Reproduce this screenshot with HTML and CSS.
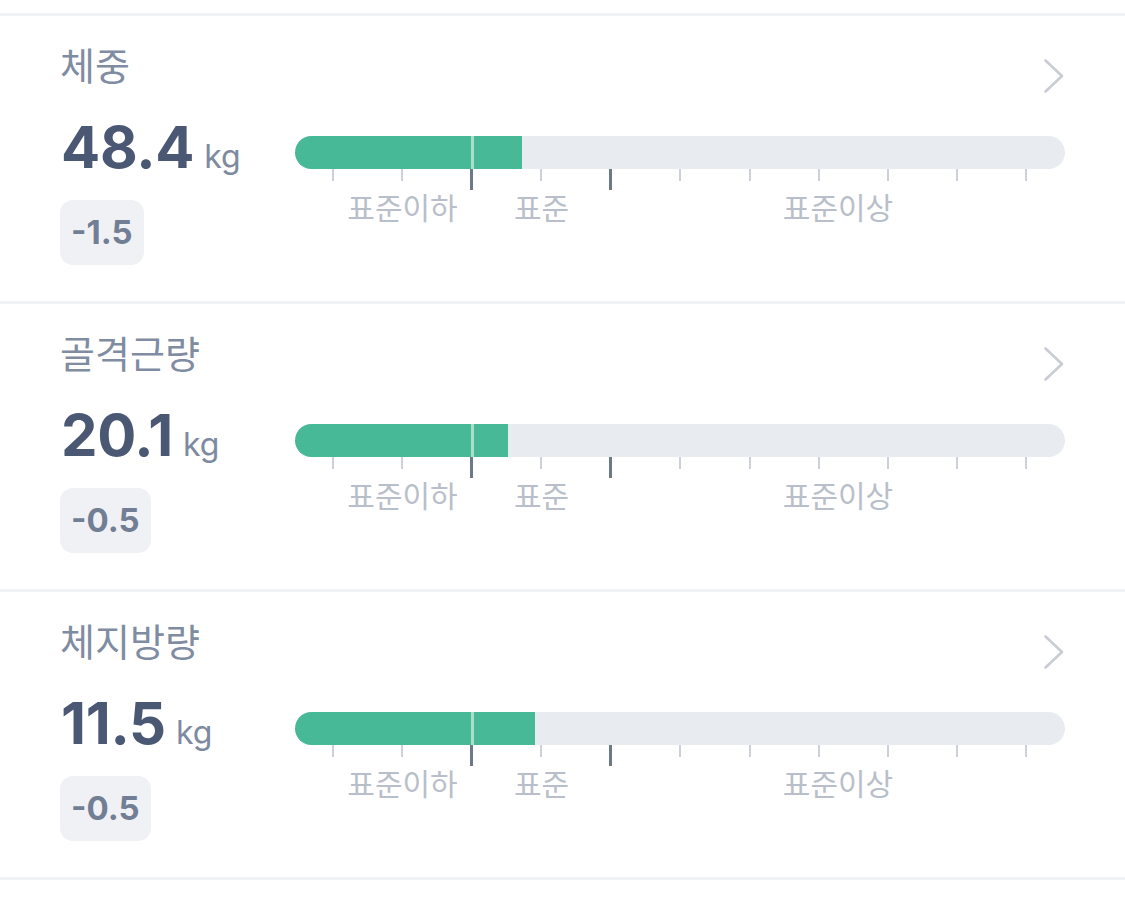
FILE: index.html
```html
<!DOCTYPE html>
<html lang="ko">
<head>
<meta charset="utf-8">
<link rel="stylesheet" href="styles.css">
</head>
<body>
<div class="list">
  <div class="row">
    <div class="head">
      <div class="title">체중</div>
      <svg class="chev" width="22" height="36" viewBox="0 0 22 36"><path d="M2.5 2.5 L19 18 L2.5 33.5" fill="none" stroke="#c9ccd3" stroke-width="2.6" stroke-linecap="round" stroke-linejoin="round"/></svg>
    </div>
    <div class="body">
      <div class="left">
        <div class="value"><span class="num">48.4</span><span class="unit">kg</span></div>
        <div class="badge">-1.5</div>
      </div>
      <div class="gauge">
        <div class="bar"><div class="fill" style="width:29.5%"></div><div class="mark"></div></div>
        <div class="ticks"><i></i><i></i><i class="big"></i><i></i><i class="big"></i><i></i><i></i><i></i><i></i><i></i><i></i></div>
        <div class="labels"><span class="l1">표준이하</span><span class="l2">표준</span><span class="l3">표준이상</span></div>
      </div>
    </div>
  </div>
  <div class="row">
    <div class="head">
      <div class="title">골격근량</div>
      <svg class="chev" width="22" height="36" viewBox="0 0 22 36"><path d="M2.5 2.5 L19 18 L2.5 33.5" fill="none" stroke="#c9ccd3" stroke-width="2.6" stroke-linecap="round" stroke-linejoin="round"/></svg>
    </div>
    <div class="body">
      <div class="left">
        <div class="value"><span class="num">20.1</span><span class="unit">kg</span></div>
        <div class="badge">-0.5</div>
      </div>
      <div class="gauge">
        <div class="bar"><div class="fill" style="width:27.7%"></div><div class="mark"></div></div>
        <div class="ticks"><i></i><i></i><i class="big"></i><i></i><i class="big"></i><i></i><i></i><i></i><i></i><i></i><i></i></div>
        <div class="labels"><span class="l1">표준이하</span><span class="l2">표준</span><span class="l3">표준이상</span></div>
      </div>
    </div>
  </div>
  <div class="row">
    <div class="head">
      <div class="title">체지방량</div>
      <svg class="chev" width="22" height="36" viewBox="0 0 22 36"><path d="M2.5 2.5 L19 18 L2.5 33.5" fill="none" stroke="#c9ccd3" stroke-width="2.6" stroke-linecap="round" stroke-linejoin="round"/></svg>
    </div>
    <div class="body">
      <div class="left">
        <div class="value"><span class="num">11.5</span><span class="unit">kg</span></div>
        <div class="badge">-0.5</div>
      </div>
      <div class="gauge">
        <div class="bar"><div class="fill" style="width:31.2%"></div><div class="mark"></div></div>
        <div class="ticks"><i></i><i></i><i class="big"></i><i></i><i class="big"></i><i></i><i></i><i></i><i></i><i></i><i></i></div>
        <div class="labels"><span class="l1">표준이하</span><span class="l2">표준</span><span class="l3">표준이상</span></div>
      </div>
    </div>
  </div>
</div>
</body>
</html>
```
FILE: styles.css
```css
html, body {
  margin: 0;
  padding: 0;
  background: #ffffff;
}
body {
  font-family: Inter, "Noto Sans CJK KR", sans-serif;
  width: 1125px;
  height: 914px;
  overflow: hidden;
}
.list {
  padding-top: 13px;
}
.row {
  border-top: 3px solid #f1f2f6;
  height: 285px;
  box-sizing: content-box;
  padding: 0 60px;
  display: flex;
  flex-direction: column;
}
.row:last-child {
  border-bottom: 3px solid #f1f2f6;
}
.head {
  display: flex;
  justify-content: space-between;
  align-items: flex-start;
  height: 88px;
}
.title {
  font-family: "Noto Sans CJK KR", sans-serif;
  font-size: 38px;
  line-height: 40px;
  color: #7f8ca1;
  margin-top: 28px;
}
.chev {
  margin-top: 42px;
  margin-right: 0;
}
.body {
  display: flex;
  align-items: flex-start;
}
.left {
  width: 235px;
  padding-top: 13px;
  display: flex;
  flex-direction: column;
  align-items: flex-start;
}
.value {
  display: flex;
  align-items: baseline;
  gap: 10px;
  color: #4b5874;
  height: 70px;
  padding-left: 1px;
}
.num {
  font-size: 58px;
  font-weight: 700;
  line-height: 60px;
  letter-spacing: -0.3px;
}
.unit {
  font-size: 32px;
  font-weight: 400;
  color: #7d8aa0;
  line-height: 40px;
}
.badge {
  margin-top: 13px;
  background: #f0f1f5;
  border-radius: 13px;
  height: 65px;
  line-height: 65px;
  padding: 0 11px;
  font-size: 33px;
  font-weight: 700;
  color: #717e94;
}
.gauge {
  flex: 1;
  padding-top: 32px;
}
.bar {
  position: relative;
  height: 33px;
  border-radius: 16.5px;
  background: #e8ebf0;
  overflow: hidden;
}
.fill {
  height: 100%;
  background: #48b997;
}
.mark {
  position: absolute;
  left: 176px;
  top: 0;
  width: 3px;
  height: 100%;
  background: #a6dfca;
}
.ticks {
  display: flex;
  justify-content: space-between;
  align-items: flex-start;
  margin-left: 37px;
  width: 695px;
}
.ticks i {
  display: block;
  width: 2px;
  height: 12px;
  background: #cdd0d7;
}
.ticks i.big {
  width: 3px;
  height: 21px;
  background: #6e788b;
}
.labels {
  display: grid;
  grid-template-columns: 38px 139px 139px 1fr;
  margin-top: -2px;
  font-family: "Noto Sans CJK KR", sans-serif;
  font-size: 30px;
  line-height: 36px;
  color: #b8bfca;
}
.labels span {
  text-align: center;
}
.l1 { grid-column: 2; }
.l2 { grid-column: 3; }
.l3 { grid-column: 4; }
```
